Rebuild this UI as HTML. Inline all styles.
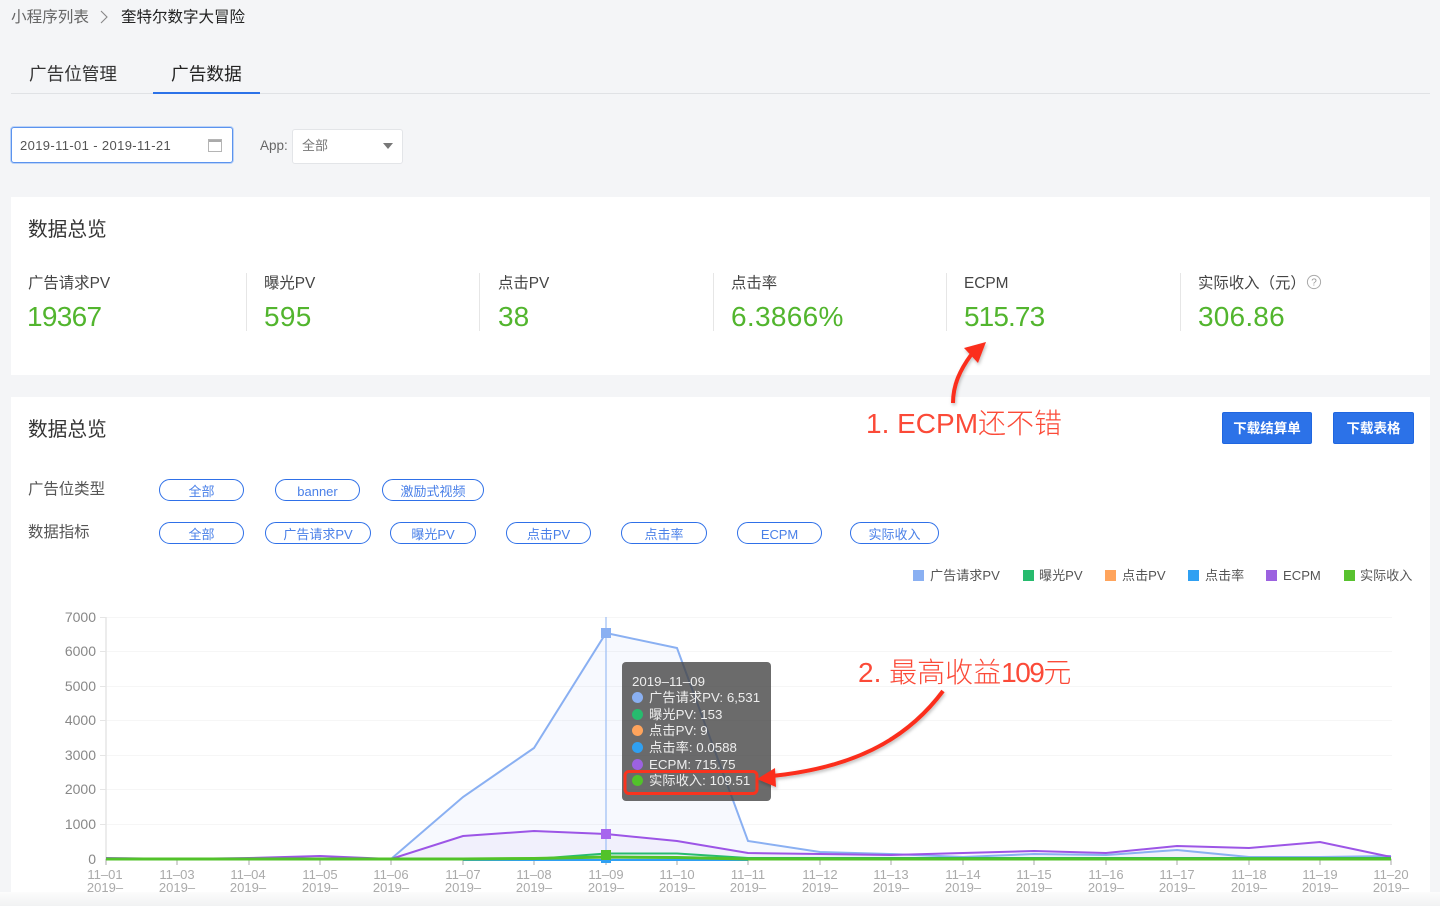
<!DOCTYPE html>
<html lang="zh"><head><meta charset="utf-8"><title>广告数据</title>
<style>
html,body{margin:0;padding:0}
body{width:1440px;height:906px;overflow:hidden;background:#f4f5f7;position:relative;font-family:"Liberation Sans","Noto Sans CJK SC",sans-serif;color:#333}
.a{position:absolute;white-space:nowrap}
.card{position:absolute;left:11px;width:1419px;background:#fff}
.h{font-size:19.700px;line-height:26px;color:#333;left:28px}
.l{font-size:15.400px;line-height:20px;color:#444;top:274px}
.v{font-size:28px;line-height:34px;color:#52b52e;top:300px}
.d{position:absolute;top:273px;width:1px;height:58px;background:#e6e6e6}
.p{position:absolute;height:20px;border:1px solid #2f70e8;border-radius:11px;text-align:center;font-size:13px;line-height:23px;color:#4a80e8;box-sizing:content-box;background:#fff}
.lg{position:absolute;top:570px;width:11px;height:11px}
.lt{font-size:13.100px;line-height:16px;color:#555;top:568px}
.btn{position:absolute;top:412px;height:32px;background:#2c72e8;border:1px solid #1f66e0;border-radius:2px;color:#fff;font-size:13.500px;font-weight:bold;line-height:31px;text-align:center;box-sizing:border-box}
.yl{font-size:14px;line-height:16px;color:#888;width:50px;text-align:right;left:46px}
.xl{font-size:13px;line-height:13px;color:#aaa;text-align:center;width:60px;top:868px}
.tt{font-size:13.300px;line-height:16px;color:#eee;left:649px}
.dot{position:absolute;left:632px;width:11px;height:11px;border-radius:50%}
.red{color:#fb4a38}
</style></head><body>

<div class="a" style="left:11px;top:8px;font-size:15.600px;line-height:20px;color:#666">小程序列表</div>
<svg class="a" style="left:98px;top:9px" width="12" height="16"><path d="M3 2l6 6-6 6" fill="none" stroke="#888" stroke-width="1.100"/></svg>
<div class="a" style="left:121px;top:8px;font-size:15.500px;line-height:20px;color:#222">奎特尔数字大冒险</div>

<div class="a" style="left:29px;top:62px;font-size:17.600px;line-height:24px;color:#333">广告位管理</div>
<div class="a" style="left:171px;top:62px;font-size:17.700px;line-height:24px;color:#222">广告数据</div>
<div class="a" style="left:11px;top:93px;width:1419px;height:1px;background:#e0e2e5"></div>
<div class="a" style="left:153px;top:92px;width:107px;height:2px;background:#2c72e8"></div>

<div class="a" style="left:11px;top:127px;width:222px;height:36px;box-sizing:border-box;background:#fff;border:1px solid #5b93ee;border-radius:3px;box-shadow:0 0 0 1px #bcd3f7"></div>
<div class="a" style="left:20px;top:138px;font-size:13px;line-height:16px;color:#555;letter-spacing:.37px">2019-11-01 - 2019-11-21</div>
<svg class="a" style="left:208px;top:138px" width="15" height="15"><rect x=".5" y="1.500" width="13" height="12" fill="#fff" stroke="#b5b5b5"/><rect x="1" y="2" width="12" height="2" fill="#aaa"/></svg>
<div class="a" style="left:260px;top:138px;font-size:13.500px;line-height:16px;color:#666">App:</div>
<div class="a" style="left:292px;top:129px;width:111px;height:35px;box-sizing:border-box;background:#fff;border:1px solid #e3e5e8;border-radius:3px"></div>
<div class="a" style="left:302px;top:138px;font-size:13px;line-height:16px;color:#777">全部</div>
<svg class="a" style="left:382px;top:142px" width="12" height="8"><path d="M1 1h10L6 7z" fill="#777"/></svg>

<div class="card" style="top:197px;height:178px"></div>
<div class="a h" style="top:217px">数据总览</div>
<div class="a l" style="left:28px">广告请求PV</div><div class="a v" style="left:27px;letter-spacing:-.7px">19367</div>
<div class="d" style="left:246px"></div>
<div class="a l" style="left:264px">曝光PV</div><div class="a v" style="left:264px;letter-spacing:.3px">595</div>
<div class="d" style="left:479px"></div>
<div class="a l" style="left:498px">点击PV</div><div class="a v" style="left:498px">38</div>
<div class="d" style="left:713px"></div>
<div class="a l" style="left:731px">点击率</div><div class="a v" style="left:731px;letter-spacing:.3px">6.3866%</div>
<div class="d" style="left:946px"></div>
<div class="a l" style="left:964px">ECPM</div><div class="a v" style="left:964px;letter-spacing:-.9px">515.73</div>
<div class="d" style="left:1180px"></div>
<div class="a l" style="left:1198px">实际收入（元）</div><div class="a v" style="left:1198px;letter-spacing:.2px">306.86</div>
<svg class="a" style="left:1306px;top:274px" width="16" height="16"><circle cx="8" cy="8" r="6.600" fill="none" stroke="#aaa"/><text x="8" y="11.500" font-size="10" text-anchor="middle" fill="#999" font-family="Liberation Sans">?</text></svg>

<div class="card" style="top:397px;height:509px"></div>
<div class="a h" style="top:417px">数据总览</div>
<div class="btn" style="left:1222px;width:90px">下载结算单</div>
<div class="btn" style="left:1333px;width:81px">下载表格</div>

<div class="a" style="left:28px;top:480px;font-size:15.400px;line-height:20px;color:#555">广告位类型</div>
<div class="p" style="left:159px;top:479px;width:83px">全部</div>
<div class="p" style="left:275px;top:479px;width:83px">banner</div>
<div class="p" style="left:382px;top:479px;width:100px">激励式视频</div>
<div class="a" style="left:28px;top:523px;font-size:15.400px;line-height:20px;color:#555">数据指标</div>
<div class="p" style="left:159px;top:522px;width:83px">全部</div>
<div class="p" style="left:265px;top:522px;width:104px">广告请求PV</div>
<div class="p" style="left:390px;top:522px;width:84px">曝光PV</div>
<div class="p" style="left:506px;top:522px;width:83px">点击PV</div>
<div class="p" style="left:621px;top:522px;width:84px">点击率</div>
<div class="p" style="left:737px;top:522px;width:83px;letter-spacing:-.1px">ECPM</div>
<div class="p" style="left:850px;top:522px;width:87px">实际收入</div>

<div class="lg" style="left:913px;background:#8ab0f2"></div><div class="a lt" style="left:930px">广告请求PV</div>
<div class="lg" style="left:1023px;background:#27bb6e"></div><div class="a lt" style="left:1039px">曝光PV</div>
<div class="lg" style="left:1105px;background:#ffa45c"></div><div class="a lt" style="left:1122px">点击PV</div>
<div class="lg" style="left:1188px;background:#2fa0f2"></div><div class="a lt" style="left:1205px">点击率</div>
<div class="lg" style="left:1266px;background:#9c62e0"></div><div class="a lt" style="left:1283px">ECPM</div>
<div class="lg" style="left:1344px;background:#58c22f"></div><div class="a lt" style="left:1360px">实际收入</div>

<svg class="a" style="left:0;top:600px" width="1440" height="306">
<g stroke="#f6f6f6" stroke-width="1">
<path d="M106 17.500H1392M106 51.500H1392M106 86.500H1392M106 120.500H1392M106 155.500H1392M106 189.500H1392M106 224.500H1392"/>
</g>
<g stroke="#e5e5e5" fill="none"><path d="M106 17V259" stroke-width="1.500"/><path d="M100 17.500h6M100 51.500h6M100 86.500h6M100 120.500h6M100 155.500h6M100 189.500h6M100 224.500h6"/>
<path d="M105 259H1392"/>
</g>
<g stroke="#aaa"><path d="M106 259v6M177 259v6M249 259v6M320 259v6M391 259v6M463 259v6M534 259v6M606 259v6M677 259v6M748 259v6M820 259v6M891 259v6M963 259v6M1034 259v6M1106 259v6M1177 259v6M1249 259v6M1320 259v6M1391 259v6"/></g>
<path d="M391 259L463 197L534 148L606 33L677 48L748 241L820 252L891 254L963 257L1034 254L1106 255L1177 250L1249 257L1320 257L1391 256V259Z" fill="#8ab0f2" fill-opacity=".07"/>
<path d="M106 258L177 259L249 258L320 256L391 259L463 236L534 231L606 234L677 241L748 253L820 254L891 255L963 253L1034 251L1106 253L1177 246L1249 248L1320 242L1391 257V259H106Z" fill="#9c62e0" fill-opacity=".06"/>
<path d="M606 17V259" stroke="#9dbdf5" stroke-width="1.200"/>
<path d="M391 259L463 197L534 148L606 33L677 48L748 241L820 252L891 254L963 257L1034 254L1106 255L1177 250L1249 257L1320 257L1391 256" fill="none" stroke="#8ab0f2" stroke-width="2"/>
<path d="M106 258L177 259L249 258L320 256L391 259L463 236L534 231L606 234L677 241L748 253L820 254L891 255L963 253L1034 251L1106 253L1177 246L1249 248L1320 242L1391 257" fill="none" stroke="#9c55e6" stroke-width="2"/>
<path d="M463 260H748" fill="none" stroke="#2fa0f2" stroke-width="2"/>
<path d="M106 259H534L606 253.500L677 253.500L748 258H1391" fill="none" stroke="#27bb6e" stroke-width="2"/>
<path d="M106 259H463L534 258.500L606 257L677 257.500L748 259H1391" fill="none" stroke="#52c22a" stroke-width="3"/>
<rect x="601" y="28" width="10" height="10" fill="#8ab0f2"/>
<rect x="601" y="229" width="10" height="10" fill="#a765ee"/>
<rect x="601" y="255" width="10" height="8" fill="#2fa0f2"/>
<rect x="601" y="250" width="10" height="10" fill="#52c22a"/>
</svg>
<div class="a yl" style="top:609px">7000</div>
<div class="a yl" style="top:643px">6000</div>
<div class="a yl" style="top:678px">5000</div>
<div class="a yl" style="top:712px">4000</div>
<div class="a yl" style="top:747px">3000</div>
<div class="a yl" style="top:781px">2000</div>
<div class="a yl" style="top:816px">1000</div>
<div class="a yl" style="top:851px">0</div>

<div class="a xl" style="left:75px">11–01<br>2019–</div>
<div class="a xl" style="left:147px">11–03<br>2019–</div>
<div class="a xl" style="left:218px">11–04<br>2019–</div>
<div class="a xl" style="left:290px">11–05<br>2019–</div>
<div class="a xl" style="left:361px">11–06<br>2019–</div>
<div class="a xl" style="left:433px">11–07<br>2019–</div>
<div class="a xl" style="left:504px">11–08<br>2019–</div>
<div class="a xl" style="left:576px">11–09<br>2019–</div>
<div class="a xl" style="left:647px">11–10<br>2019–</div>
<div class="a xl" style="left:718px">11–11<br>2019–</div>
<div class="a xl" style="left:790px">11–12<br>2019–</div>
<div class="a xl" style="left:861px">11–13<br>2019–</div>
<div class="a xl" style="left:933px">11–14<br>2019–</div>
<div class="a xl" style="left:1004px">11–15<br>2019–</div>
<div class="a xl" style="left:1076px">11–16<br>2019–</div>
<div class="a xl" style="left:1147px">11–17<br>2019–</div>
<div class="a xl" style="left:1219px">11–18<br>2019–</div>
<div class="a xl" style="left:1290px">11–19<br>2019–</div>
<div class="a xl" style="left:1361px">11–20<br>2019–</div>

<div class="a" style="left:0;top:892px;width:1440px;height:14px;background:linear-gradient(#fcfcfc,#f1f2f3)"></div>

<div class="a" style="left:622px;top:662px;width:149px;height:139px;background:rgba(70,70,70,.8);border-radius:4px"></div>
<div class="a tt" style="left:632px;top:674px">2019–11–09</div>
<div class="dot" style="top:692px;background:#8ab0f2"></div><div class="a tt" style="top:690px">广告请求PV: 6,531</div>
<div class="dot" style="top:709px;background:#27bb6e"></div><div class="a tt" style="top:707px">曝光PV: 153</div>
<div class="dot" style="top:725px;background:#ffa45c"></div><div class="a tt" style="top:723px">点击PV: 9</div>
<div class="dot" style="top:742px;background:#2fa0f2"></div><div class="a tt" style="top:740px">点击率: 0.0588</div>
<div class="dot" style="top:759px;background:#9c62e0"></div><div class="a tt" style="top:757px">ECPM: 715.75</div>
<div class="dot" style="top:775px;background:#52c22a"></div><div class="a tt" style="top:773px">实际收入: 109.51</div>

<svg class="a" style="left:0;top:0" width="1440" height="906">
<defs><filter id="s" x="-20%" y="-20%" width="140%" height="140%"><feDropShadow dx="1" dy="2" stdDeviation="1.500" flood-color="#000" flood-opacity=".25"/></filter></defs>
<rect x="625" y="771.500" width="132" height="22" rx="4" fill="none" stroke="#f8341f" stroke-width="3"/>
<g filter="url(#s)">
<path d="M953 403C953 385 960 370 971 355" fill="none" stroke="#fb2f1d" stroke-width="4"/>
<path d="M986 342L964 348L978 363Z" fill="#fb2f1d"/>
<path d="M943 691C905 742 850 768 772 776" fill="none" stroke="#fb2f1d" stroke-width="4"/>
<path d="M757 779L775 768L776 787Z" fill="#fb2f1d"/>
</g>
</svg>
<div class="a red" style="left:866px;top:406px;font-size:28px;line-height:36px;font-weight:300">1. ECPM还不错</div>
<div class="a red" style="left:858px;top:655px;font-size:28px;line-height:36px;font-weight:300">2. 最高收益<span style="letter-spacing:-1.500px">109</span>元</div>
</body></html>
